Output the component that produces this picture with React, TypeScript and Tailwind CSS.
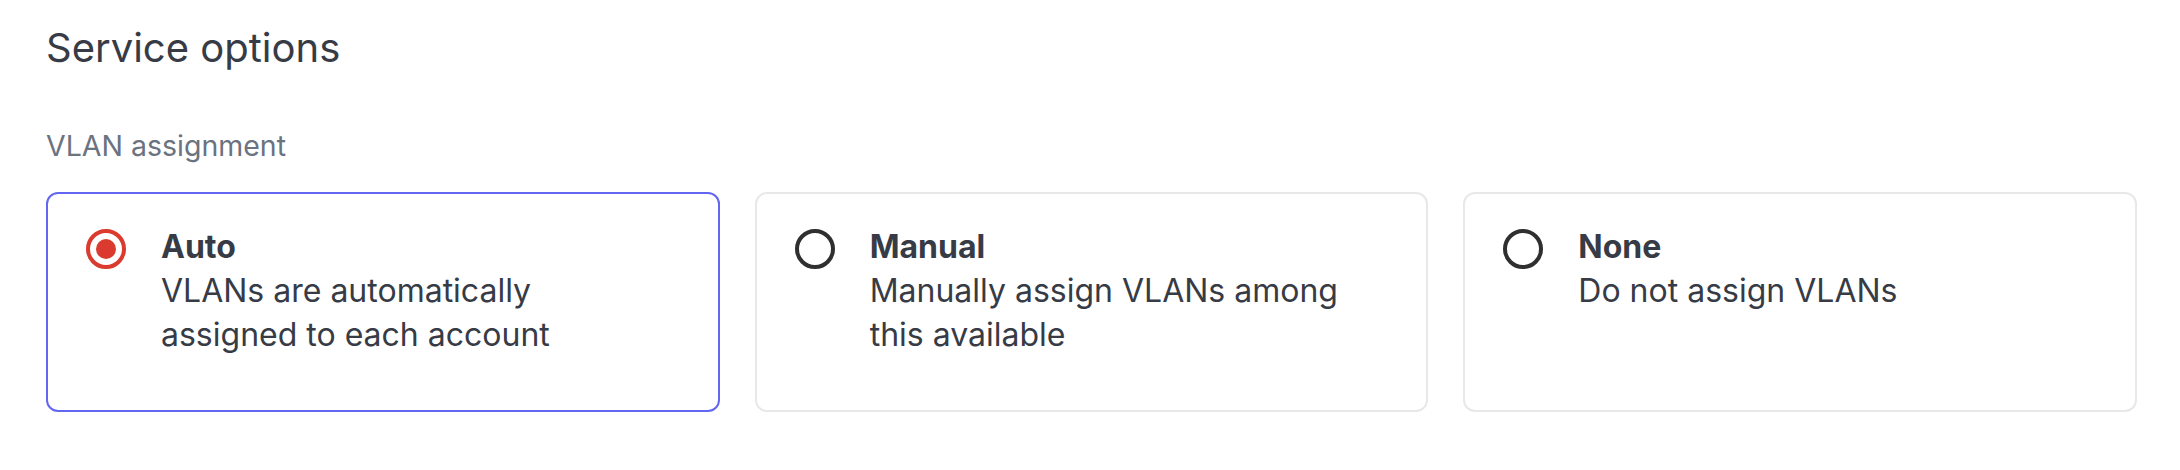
import React from "react";

type Option = { title: string; lines: string[]; selected?: boolean };

const options: Option[] = [
  { title: "Auto", lines: ["VLANs are automatically", "assigned to each account"], selected: true },
  { title: "Manual", lines: ["Manually assign VLANs among", "this available"] },
  { title: "None", lines: ["Do not assign VLANs"] },
];

function Radio({ selected }: { selected?: boolean }) {
  if (selected) {
    return (
      <span className="flex h-[40px] w-[40px] shrink-0 items-center justify-center rounded-full border-[4px] border-[#db3a2f]">
        <span className="h-[20px] w-[20px] rounded-full bg-[#db3a2f]" />
      </span>
    );
  }
  return <span className="block h-[40px] w-[40px] shrink-0 rounded-full border-[4px] border-[#2f2f2f]" />;
}

export default function App() {
  return (
    <div
      className="min-h-[470px] bg-white pl-[46px] pr-[43px] pt-[20px] text-[#373b45]"
      style={{ fontFamily: "Inter, 'Noto Sans', sans-serif" }}
    >
      <h1 className="text-[40px] leading-[56px] font-normal text-[#373b45]">Service options</h1>
      <div className="mt-[52px] text-[28.5px] leading-[36px] text-[#6b7280]">VLAN assignment</div>
      <div className="mt-[28px] grid grid-cols-3 gap-[35px]">
        {options.map((o) => (
          <div
            key={o.title}
            className={`flex h-[220px] gap-[35px] rounded-[12px] border-[2px] px-[38px] pt-[31px] ${
              o.selected ? "border-[#6366f1]" : "border-[#e8e8eb]"
            }`}
          >
            <div className="pt-[4px]">
              <Radio selected={o.selected} />
            </div>
            <div className="text-[32px] leading-[44px]">
              <div className="font-bold">{o.title}</div>
              {o.lines.map((l) => (
                <div key={l}>{l}</div>
              ))}
            </div>
          </div>
        ))}
      </div>
    </div>
  );
}
